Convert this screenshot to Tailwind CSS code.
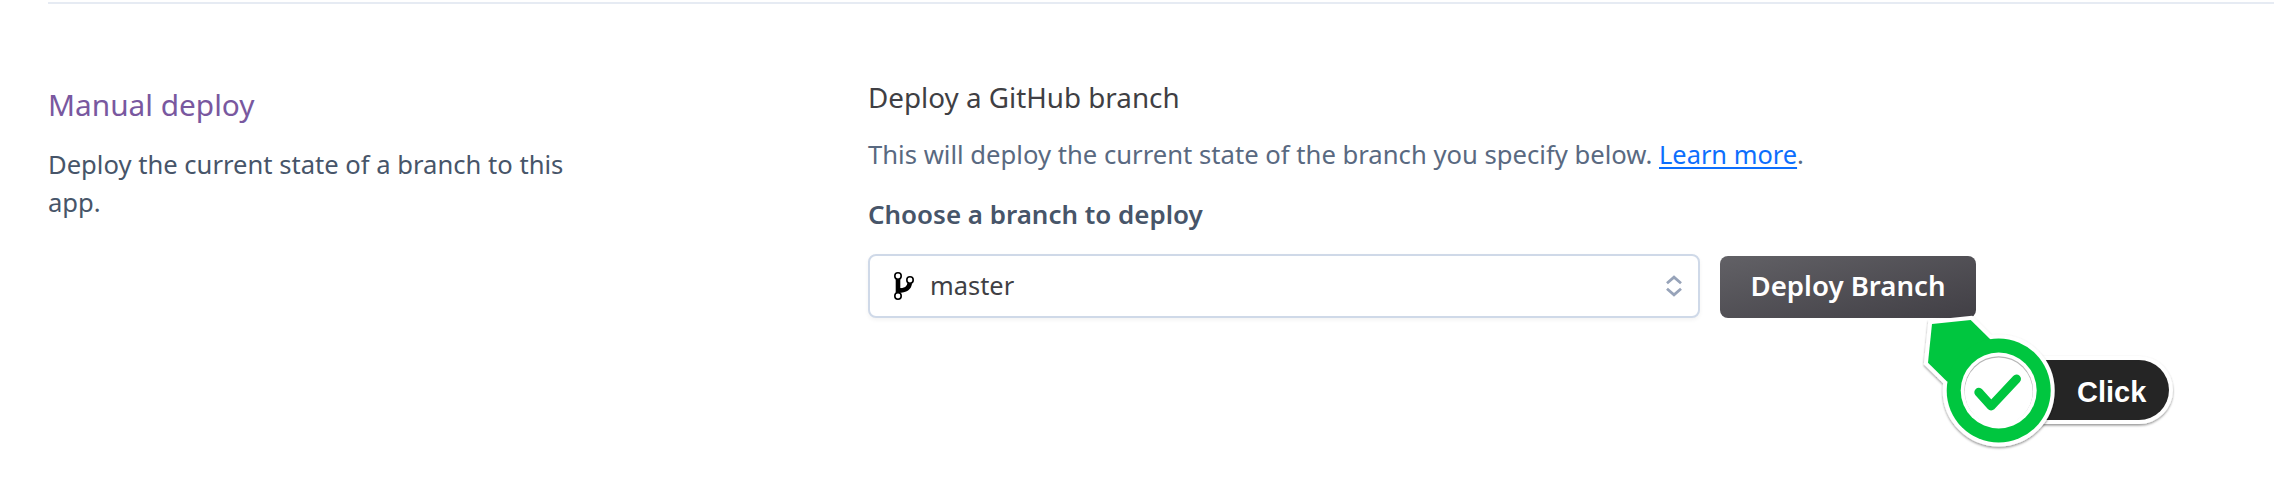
<!DOCTYPE html>
<html lang="en">
<head>
<meta charset="utf-8">
<title>Manual deploy</title>
<script src="https://cdn.jsdelivr.net/npm/@tailwindcss/browser@4"></script>
</head>
<body class="relative h-[488px] w-[2274px] overflow-hidden bg-white font-['Noto_Sans',sans-serif]">
  <main class="ml-12 pt-0.5">
    <div class="h-0.5 bg-[#e6ebf3]"></div>
    <div class="flex">
      <section class="w-[820px] shrink-0 pt-[83px]">
        <h2 class="text-[29.8px] leading-9 text-[#79589f]">Manual deploy</h2>
        <p class="mt-[23px] w-[530px] text-[25.6px] leading-[38px] text-[#475569]">Deploy the current state of a branch to this app.</p>
      </section>
      <section class="pt-[75px]">
        <h3 class="text-[27.8px] leading-9 text-[#3f3f44]">Deploy a GitHub branch</h3>
        <p class="mt-[21px] h-[38px] text-[25.65px] leading-[38px] whitespace-nowrap text-[#596981]">This will deploy the current state of the branch you specify below. <a href="#" class="text-[25.4px] leading-none text-[#0d6efd] underline decoration-2 underline-offset-[3px] [text-decoration-skip-ink:none]">Learn more</a>.</p>
        <label class="mt-[21px] block text-[25.95px] leading-[38px] font-semibold text-[#475569]">Choose a branch to deploy</label>
        <div class="mt-[21px] flex items-end gap-5">
          <div class="flex h-16 w-[832px] items-center rounded-lg border-2 border-[#cfd9e8] bg-white pr-3.5 pl-[22px] shadow-[0_2px_4px_rgba(0,0,0,0.05)]">
            <svg class="h-8 w-6 shrink-0" viewBox="0 0 24 32" fill="none" stroke="#000">
              <path d="M6 9V23M6 20.5C13 20.5 17.2 19 17.8 13" stroke-width="4.6"/>
              <g fill="#fff" stroke-width="1.6"><circle cx="6" cy="6" r="3.2"/><circle cx="18" cy="10" r="3.2"/><circle cx="6" cy="26" r="3.2"/></g>
            </svg>
            <span class="ml-3.5 grow pb-[3px] text-[25.4px] leading-9 text-[#3f3f44]">master</span>
            <svg class="h-6 w-5 shrink-0" viewBox="0 0 20 24" fill="none" stroke="#97a3b9" stroke-width="2.8"><path d="M3 9.2 10 3.2 17 9.2M3 14.8 10 20.8 17 14.8"/></svg>
          </div>
          <button class="flex h-[62px] w-64 items-center justify-center rounded-lg bg-linear-to-br from-[#626166] to-[#413f45] pb-[5px] text-[27.6px] leading-9 font-semibold text-white">Deploy Branch</button>
        </div>
      </section>
    </div>
  </main>

  <!-- Click callout overlapping the button corner -->
  <div class="absolute top-[308px] left-[1914px] h-[150px] w-[270px]">
    <svg class="absolute inset-0" width="270" height="150" viewBox="1914 308 270 150">
      <defs>
        <filter id="sh" x="-20%" y="-20%" width="140%" height="150%"><feDropShadow dx="0" dy="1.5" stdDeviation="1.2" flood-color="#000" flood-opacity=".42"/></filter>
      </defs>
      <path filter="url(#sh)" fill="#fff" d="M2000 356H2139A34 34 0 0 1 2139 424H2000Z"/>
      <path fill="#252525" d="M2000 360H2139A30 30 0 0 1 2139 420H2000Z"/>
      <g filter="url(#sh)" fill="#fff" stroke="#fff" stroke-width="8">
        <path d="M1932 324 1970.7 320 1991 340 1998.7 390.5 1947 381.5 1928 362.7Z"/>
        <circle cx="1998.7" cy="390.5" r="52"/>
      </g>
      <path fill="#00c63f" d="M1932 324 1970.7 320 1991 340 1998.7 390.5 1947 381.5 1928 362.7Z"/>
      <circle cx="1998.7" cy="390.5" r="52" fill="#00c63f"/>
      <circle cx="1998.7" cy="390.5" r="38" fill="#fff"/>
      <circle cx="1998.7" cy="390.5" r="34.3" fill="#b5b5b5"/>
      <circle cx="1998.7" cy="391.5" r="34" fill="#fff"/>
      <path d="M1978.8 392.3 1991.2 406 2016.5 379" fill="none" stroke="#00c63f" stroke-width="9" stroke-linecap="round" stroke-linejoin="round"/>
    </svg>
    <span class="absolute top-[66px] left-[163px] font-['Liberation_Sans',sans-serif] text-[29px] leading-9 font-bold text-white">Click</span>
  </div>
</body>
</html>
